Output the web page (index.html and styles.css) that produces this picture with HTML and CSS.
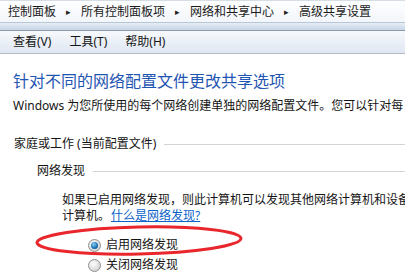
FILE: index.html
```html
<!DOCTYPE html>
<html lang="zh-CN">
<head>
<meta charset="utf-8">
<link rel="stylesheet" href="styles.css">
</head>
<body>
<div class="crumbbar">
  <span class="crumb">控制面板</span><span class="arrow">▸</span>
  <span class="crumb">所有控制面板项</span><span class="arrow">▸</span>
  <span class="crumb">网络和共享中心</span><span class="arrow">▸</span>
  <span class="crumb">高级共享设置</span>
</div>
<div class="band"></div>
<div class="menubar">
  <span class="menu">查看(V)</span>
  <span class="menu">工具(T)</span>
  <span class="menu">帮助(H)</span>
</div>
<div class="content">
  <h1 class="title">针对不同的网络配置文件更改共享选项</h1>
  <p class="desc">Windows 为您所使用的每个网络创建单独的网络配置文件。您可以针对每</p>
  <div class="section"><span>家庭或工作 (当前配置文件)</span><span class="rule"></span></div>
  <div class="subsection"><span>网络发现</span><span class="rule"></span></div>
  <div class="para">
    <div class="line">如果已启用网络发现，则此计算机可以发现其他网络计算机和设备</div>
    <div class="line">计算机。<a class="link" href="#">什么是网络发现?</a></div>
  </div>
  <div class="options">
    <label class="opt"><span class="radio checked"></span>启用网络发现</label>
    <label class="opt"><span class="radio"></span>关闭网络发现</label>
  </div>
</div>
<svg class="mark" width="405" height="279" viewBox="0 0 405 279">
  <ellipse cx="139" cy="240.5" rx="102" ry="13.5" transform="rotate(-1.2 139 240.5)" fill="none" stroke="#e8262c" stroke-width="3"/>
</svg>
</body>
</html>
```
FILE: styles.css
```css
html, body {
  margin: 0;
  padding: 0;
  background: #fff;
}
body {
  width: 405px;
  height: 279px;
  overflow: hidden;
  position: relative;
  font-family: "Noto Sans", "Noto Sans CJK SC", sans-serif;
  font-size: 12px;
  color: #141414;
}
.crumbbar {
  height: 21px;
  border-top: 1px solid #d7dde5;
  background: linear-gradient(#fdfeff, #f3f6fa);
  display: flex;
  align-items: center;
  padding-left: 8px;
  white-space: nowrap;
  font-size: 12px;
  line-height: 16px;
  color: #1a1a1a;
}
.arrow {
  font-size: 9px;
  margin: 0 10px 0 10px;
  color: #222;
}
.band {
  height: 7px;
  border-top: 1px solid #b9c6d6;
  border-bottom: 1px solid #8d9bab;
  background: linear-gradient(#e6eef7, #c6d5e7);
}
.menubar {
  height: 22px;
  border-bottom: 1px solid #b3bac4;
  background: linear-gradient(#f7f9fc, #dfe7f1);
  display: flex;
  align-items: center;
  gap: 18px;
  padding-left: 13px;
  font-size: 12px;
  line-height: 16px;
}
.content {
  padding: 16px 0 0 13px;
  white-space: nowrap;
}
.title {
  margin: 0;
  font-size: 16px;
  font-weight: normal;
  line-height: 22px;
  color: #1f55b3;
}
.desc {
  margin: 6px 0 0;
  line-height: 16px;
  font-size: 12px;
}
.section, .subsection {
  display: flex;
  align-items: center;
  line-height: 16px;
}
.section {
  margin-top: 22px;
  padding-left: 1px;
}
.subsection {
  margin-top: 11px;
  padding-left: 24px;
}
.rule {
  flex: 1;
  height: 1px;
  background: #d4d4d4;
  margin-left: 8px;
}
.para {
  margin: 13px 0 0 49px;
  line-height: 16px;
}
.line {
  white-space: nowrap;
}
.link {
  color: #0a62c9;
  text-decoration: underline;
  margin-left: 1px;
}
.options {
  margin: 11px 0 0 75px;
  display: flex;
  flex-direction: column;
}
.opt {
  display: flex;
  align-items: center;
  height: 20px;
  line-height: 16px;
}
.radio {
  width: 11px;
  height: 11px;
  border-radius: 50%;
  border: 1px solid #8e8f8f;
  background: radial-gradient(circle at 40% 35%, #ffffff, #dcdcdc 60%, #c4c4c4);
  margin-right: 5px;
  position: relative;
  box-sizing: content-box;
}
.radio.checked::after {
  content: "";
  position: absolute;
  left: 2px;
  top: 2px;
  width: 7px;
  height: 7px;
  border-radius: 50%;
  background: radial-gradient(circle at 40% 35%, #8fd0f5, #1b74b8 55%, #0c3f6e);
}
.mark {
  position: absolute;
  left: 0;
  top: 0;
  pointer-events: none;
}
```
